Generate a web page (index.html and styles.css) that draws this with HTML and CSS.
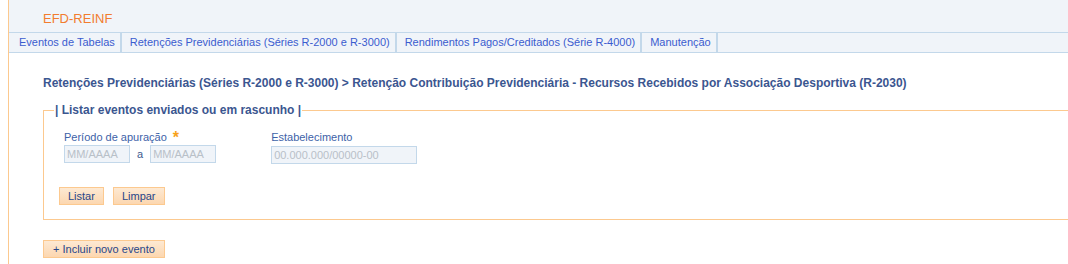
FILE: index.html
```html
<!DOCTYPE html>
<html lang="pt-BR">
<head>
    <meta charset="UTF-8">
    <title>EFD-REINF</title>
    <link rel="stylesheet" href="styles.css">
</head>
<body>
    <div class="page">
        <div class="header">
            <div class="title">EFD-REINF</div>
        </div>

        <ul class="tabs">
            <li>Eventos de Tabelas</li>
            <li>Retenções Previdenciárias (Séries R-2000 e R-3000)</li>
            <li>Rendimentos Pagos/Creditados (Série R-4000)</li>
            <li>Manutenção</li>
        </ul>

        <div class="content">
            <div class="breadcrumb">Retenções Previdenciárias (Séries R-2000 e R-3000) &gt; Retenção Contribuição Previdenciária - Recursos Recebidos por Associação Desportiva (R-2030)</div>

            <fieldset class="filter">
                <legend>| Listar eventos enviados ou em rascunho |</legend>

                <div class="fields">
                    <div class="field">
                        <label>Período de apuração <span class="required">*</span></label>
                        <div class="range">
                            <input type="text" class="input-date" placeholder="MM/AAAA">
                            <span class="sep">a</span>
                            <input type="text" class="input-date" placeholder="MM/AAAA">
                        </div>
                    </div>
                    <div class="field">
                        <label>Estabelecimento</label>
                        <input type="text" class="input-cnpj" placeholder="00.000.000/00000-00">
                    </div>
                </div>

                <div class="actions">
                    <button>Listar</button>
                    <button>Limpar</button>
                </div>
            </fieldset>

            <button class="btn-new">+ Incluir novo evento</button>
        </div>
    </div>
</body>
</html>
```

FILE: styles.css
```css
body {
    margin: 0;
    font-family: 'Liberation Sans', Arial, sans-serif;
    background-color: #fff;
}

.page {
    margin-left: 8px;
    border-left: 1px solid #fcc98f;
    min-height: 264px;
}

.header {
    height: 32px;
    background-color: #f0f4f9;
    display: flex;
    align-items: center;
    padding-left: 34px;
}

.title {
    color: #f27c2f;
    font-size: 13px;
    padding-top: 4px;
}

.tabs {
    list-style: none;
    margin: 0;
    padding: 0;
    display: flex;
    height: 19px;
    background-color: #f0f4f9;
    border-top: 1px solid #c3d8ea;
    border-bottom: 1px solid #c3d8ea;
}

.tabs li {
    font-size: 11px;
    line-height: 19px;
    color: #3b5ccf;
    padding: 0 5px 0 8px;
    border-right: 2px solid #c3d8ea;
}

.tabs li:first-child {
    padding-left: 10px;
}

.content {
    padding: 23px 0 0 34px;
}

.breadcrumb {
    font-size: 12px;
    font-weight: bold;
    line-height: 14px;
    color: #3b5690;
}

.filter {
    margin: 13px 0 0 0;
    padding: 13px 0 14px 20px;
    border: 1px solid #fcc98f;
    border-right: none;
}

.filter legend {
    margin-left: -10px;
    padding: 0 1px;
    font-size: 12px;
    font-weight: bold;
    color: #3b5690;
}

.fields {
    display: flex;
    gap: 55px;
}

.field label {
    display: block;
    font-size: 11px;
    line-height: 14px;
    color: #3d62a8;
    margin-bottom: 1px;
}

.required {
    color: #f7a21b;
    font-size: 16px;
    font-weight: bold;
    line-height: 10px;
    position: relative;
    top: 2px;
    margin-left: 3px;
}

.range {
    display: flex;
    align-items: center;
}

.sep {
    font-size: 11px;
    color: #3d5a8f;
    margin: 0 7px;
}

input {
    height: 18px;
    box-sizing: border-box;
    border: 1px solid #c3d8ea;
    background-color: #f0f4f9;
    font-family: inherit;
    font-size: 11px;
    padding: 0 2px;
    margin: 0;
}

input::placeholder {
    color: #b8c0c8;
}

.input-date {
    width: 66px;
}

.input-cnpj {
    width: 146px;
}

.actions {
    display: flex;
    gap: 9px;
    margin-top: 23px;
    margin-left: -5px;
}

button {
    height: 18px;
    padding: 0 8px;
    font-family: inherit;
    font-size: 11px;
    color: #27468a;
    background: linear-gradient(#fde9d3, #fcd7b0);
    border: 1px solid #fcc98f;
    cursor: pointer;
}

.btn-new {
    margin-top: 20px;
    padding: 0 9px;
}
```
